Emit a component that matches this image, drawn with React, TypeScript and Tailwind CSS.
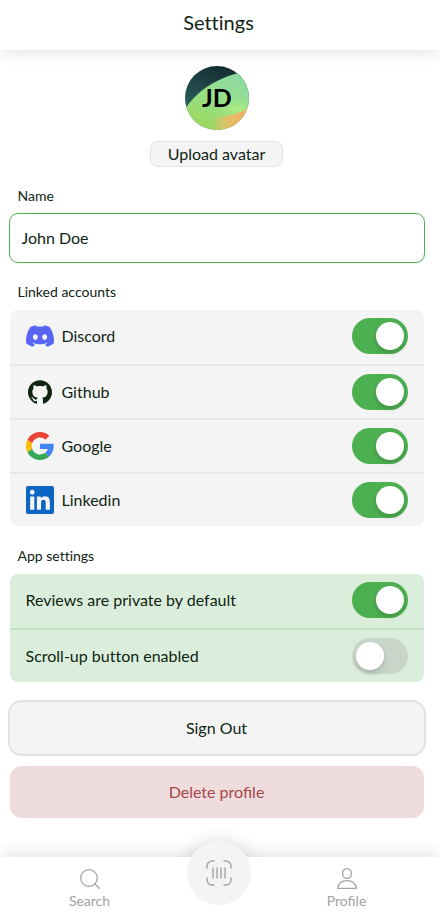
import { useState, type ReactNode } from "react";
import { SiDiscord, SiGithub } from "react-icons/si";

function GoogleLogo() {
  return (
    <svg viewBox="0 0 48 48" className="size-7">
      <path fill="#EA4335" d="M24 9.5c3.54 0 6.71 1.22 9.21 3.6l6.85-6.85C35.9 2.38 30.47 0 24 0 14.62 0 6.51 5.38 2.56 13.22l7.98 6.19C12.43 13.72 17.74 9.5 24 9.5z" />
      <path fill="#4285F4" d="M47.5 24.55c0-1.57-.15-3.09-.38-4.55H24v9.02h13.2c-.58 2.96-2.26 5.48-5.04 7.18l7.73 6c4.51-4.18 7.61-10.36 7.61-17.65z" />
      <path fill="#FBBC05" d="M10.53 28.59c-.48-1.45-.76-2.99-.76-4.59s.27-3.14.76-4.59l-7.98-6.19C.92 16.46 0 20.12 0 24c0 3.88.92 7.54 2.56 10.78l7.97-6.19z" />
      <path fill="#34A853" d="M24 48c6.48 0 11.93-2.13 15.89-5.81l-7.73-6c-2.15 1.45-4.92 2.3-8.16 2.3-6.26 0-11.57-4.22-13.47-9.91l-7.98 6.19C6.51 42.62 14.62 48 24 48z" />
    </svg>
  );
}

function LinkedinLogo() {
  return (
    <svg viewBox="0 0 24 24" className="size-7" fill="#0A66C2">
      <path d="M20.447 20.452h-3.554v-5.569c0-1.328-.027-3.037-1.852-3.037-1.853 0-2.136 1.445-2.136 2.939v5.667H9.351V9h3.414v1.561h.046c.477-.9 1.637-1.85 3.37-1.85 3.601 0 4.267 2.37 4.267 5.455v6.286zM5.337 7.433a2.062 2.062 0 01-2.063-2.065 2.064 2.064 0 112.063 2.065zm1.782 13.019H3.555V9h3.564v11.452zM22.225 0H1.771C.792 0 0 .774 0 1.729v20.542C0 23.227.792 24 1.771 24h20.451C23.2 24 24 23.227 24 22.271V1.729C24 .774 23.2 0 22.222 0h.003z" />
    </svg>
  );
}

function Toggle({ initial }: { initial: boolean }) {
  const [on, setOn] = useState(initial);
  return (
    <button
      type="button"
      role="switch"
      aria-checked={on}
      onClick={() => setOn(!on)}
      className={`flex h-9 w-14 items-center rounded-full px-1 ${on ? "justify-end bg-[#4caf50]" : "justify-start bg-[#c8d5c9]"}`}
    >
      <span className="size-7 rounded-full bg-white shadow-[0_3px_5px_rgba(0,0,0,0.16)]" />
    </button>
  );
}

function Row({ icon, label, on }: { icon?: ReactNode; label: string; on: boolean }) {
  return (
    <div className="flex h-[52px] items-center justify-between px-4">
      <div className="flex items-center gap-2">
        {icon && <span className="flex w-7 justify-center">{icon}</span>}
        <span className="-ml-[0.5px] [font-variant-ligatures:none]">{label}</span>
      </div>
      <Toggle initial={on} />
    </div>
  );
}

function Avatar() {
  return (
    <div className="relative flex size-16 items-center justify-center overflow-hidden rounded-full pb-0.5">
      <svg viewBox="0 0 64 64" className="absolute inset-0 size-16">
        <defs>
          <linearGradient id="dark" x1="0.6" y1="0" x2="0.3" y2="1">
            <stop offset="0" stopColor="#142c30" />
            <stop offset="1" stopColor="#33726f" />
          </linearGradient>
          <linearGradient id="green" x1="0.8" y1="0" x2="0.35" y2="1">
            <stop offset="0" stopColor="#8bd8a8" />
            <stop offset="0.45" stopColor="#96e08e" />
            <stop offset="1" stopColor="#9bd85c" />
          </linearGradient>
          <linearGradient id="orange" x1="26" y1="56" x2="60" y2="56" gradientUnits="userSpaceOnUse">
            <stop offset="0" stopColor="#e5be66" stopOpacity="0" />
            <stop offset="0.5" stopColor="#e5be66" />
            <stop offset="1" stopColor="#f0b060" />
          </linearGradient>
          <radialGradient id="glow">
            <stop offset="0" stopColor="#b4ef86" stopOpacity="0.8" />
            <stop offset="1" stopColor="#b4ef86" stopOpacity="0" />
          </radialGradient>
        </defs>
        <path d="M0 0H64V64H0Z" fill="url(#dark)" />
        <path d="M0 43Q17 17 53 7L64 4V64H0Z" fill="url(#green)" />
        <ellipse cx="51" cy="43" rx="19" ry="9" fill="url(#glow)" />
        <path d="M22 64V52Q36 51 46 49Q56 47 64 41V64Z" fill="url(#orange)" />
      </svg>
      <span className="relative text-[25px] font-bold leading-none text-black">JD</span>
    </div>
  );
}

export default function App() {
  return (
    <div className="flex h-[920px] w-[440px] flex-col overflow-hidden bg-white font-['Lato','Noto_Sans',sans-serif] text-base leading-6 text-[#0f2413]">
      <header className="flex h-[50px] shrink-0 items-center justify-center bg-white pr-[3px] pb-1.5 text-xl shadow-[0_0_18px_rgba(0,0,0,0.15)]">
        <h1 className="[font-variant-ligatures:none]">Settings</h1>
      </header>

      <main className="flex w-[434px] grow flex-col px-2.5 pt-4">
        <div className="flex flex-col items-center">
          <Avatar />
          <button className="mt-[11px] mr-px h-[26px] w-[133px] rounded-lg border border-[#e3e3e3] bg-[#f4f4f4] leading-6">
            Upload avatar
          </button>
        </div>

        <label htmlFor="name" className="mt-[19px] pl-[7.5px] text-sm leading-5">Name</label>
        <input
          id="name"
          defaultValue="John Doe"
          className="-mx-px mt-[7px] h-[50px] shrink-0 rounded-[9px] border border-[#4caf50] pr-3 pb-px pl-[11.5px] outline-none"
        />

        <h2 className="mt-[19px] pl-[7.5px] text-sm leading-5">Linked accounts</h2>
        <section className="mt-2 flex flex-col overflow-hidden rounded-lg bg-[#f4f4f4]">
          <Row icon={<SiDiscord size={28} color="#5865F2" />} label="Discord" on />
          <div className="mt-0.5 h-0.5 bg-[#e6e6e6]" />
          <Row icon={<SiGithub size={24} />} label="Github" on />
          <div className="h-0.5 bg-[#e6e6e6]" />
          <Row icon={<GoogleLogo />} label="Google" on />
          <div className="h-0.5 bg-[#e6e6e6]" />
          <Row icon={<LinkedinLogo />} label="Linkedin" on />
        </section>

        <h2 className="mt-5 pl-[7.5px] text-sm leading-5 [font-variant-ligatures:none]">App settings</h2>
        <section className="mt-2 flex flex-col overflow-hidden rounded-lg bg-[#dbeedc]">
          <Row label="Reviews are private by default" on />
          <div className="mt-0.5 h-0.5 bg-[#c0e2c2]" />
          <Row label="Scroll-up button enabled" on={false} />
        </section>

        <button className="-mx-0.5 mt-[18px] h-14 shrink-0 rounded-[14px] border-2 border-[#e2e2e2] bg-[#f4f4f4] pr-px">
          Sign Out
        </button>
        <button className="mt-2.5 h-[52px] shrink-0 rounded-xl bg-[#efdcdd] pr-px text-[#a3474b]">
          Delete profile
        </button>
      </main>

      <nav className="flex h-[63px] shrink-0 justify-between bg-white pr-[69.5px] pl-[65.5px] text-sm leading-5 text-[#a3a3a3] shadow-[0_0_18px_rgba(0,0,0,0.15)]">
        <a className="flex w-12 flex-col items-center pt-2.5">
          <svg viewBox="0 0 24 24" className="size-6" fill="none" stroke="currentColor" strokeWidth="1.3" strokeLinecap="round">
            <circle cx="11" cy="11" r="8.3" />
            <path d="m17 17 4.2 4.2" />
          </svg>
          <span>Search</span>
        </a>
        <a className="relative -mt-4 ml-px size-16">
          <span className="absolute inset-0 rounded-full shadow-[0_0_18px_rgba(0,0,0,0.15)] [clip-path:inset(-24px_-24px_48px_-24px)]" />
          <span className="relative flex size-16 items-center justify-center rounded-full bg-[#f4f4f4]">
            <svg viewBox="0 0 26 26" className="size-[26px]" fill="none" stroke="currentColor" strokeWidth="1.4">
              <path strokeLinecap="round" d="M1 8V6a5 5 0 0 1 5-5h2M18 1h2a5 5 0 0 1 5 5v2M25 18v2a5 5 0 0 1-5 5h-2M8 25H6a5 5 0 0 1-5-5v-2" />
              <path d="M7 7.5v11M11 7.5v11M15 7.5v11M19 7.5v11" />
            </svg>
          </span>
        </a>
        <a className="flex w-12 flex-col items-center pt-2.5">
          <svg viewBox="0 0 24 24" className="size-6" fill="none" stroke="currentColor" strokeWidth="1.3" strokeLinejoin="round">
            <ellipse cx="12" cy="6.5" rx="4.4" ry="4.9" />
            <path d="M2.7 21.3c0-4.6 4-7.6 9.3-7.6s9.3 3 9.3 7.6Z" />
          </svg>
          <span>Profile</span>
        </a>
      </nav>
    </div>
  );
}
